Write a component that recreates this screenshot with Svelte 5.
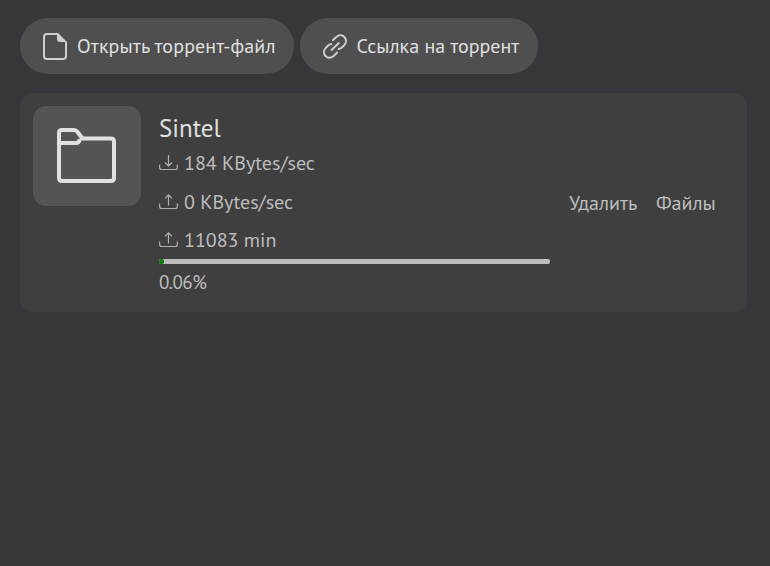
<script>
  const stats = [
    { kind: 'down', text: '184 KBytes/sec' },
    { kind: 'up', text: '0 KBytes/sec' },
    { kind: 'up', text: '11083 min' }
  ];
  const percent = 0.06;
</script>

<main>
  <nav>
    <button class="pill file">
      <svg width="26" height="28" viewBox="0 0 26 28">
        <path d="M15 2H4Q1 2 1 5V24Q1 27 4 27H20Q23 27 23 24V10" fill="none" stroke="#cfcfcf" stroke-width="2" />
        <path d="M14 1H15L24 10H17Q14 10 14 7Z" fill="#cfcfcf" />
      </svg>
      <span>Открыть торрент-файл</span>
    </button>
    <button class="pill link">
      <svg width="26" height="28" viewBox="0 0 26 28" fill="none" stroke="#cfcfcf" stroke-width="2">
        <path d="M9.300 8.700L13.300 5C19-.2 26.500 7.500 21.200 13.200L18.500 15.800Q16.800 17.200 14.800 17" />
        <path d="M9.200 11.900Q7 11.700 5.400 13.200L2.800 15.900C-2.600 21.500 5 29.200 10.600 23.900L14.700 20.100" />
        <path d="M8 18.500L16.300 10.500" />
      </svg>
      <span>Ссылка на торрент</span>
    </button>
  </nav>

  <article>
    <div class="tile">
      <svg width="60" height="56" viewBox="0 0 60 56" fill="none" stroke="#e0e0e0" stroke-width="4" stroke-linejoin="round">
        <path d="M2 5Q2 2 5 2H17Q19 2 20.500 4L25.500 10.500H54Q57 10.500 57 13.500V50Q57 53 54 53H5Q2 53 2 50Z" />
        <path d="M2 15H19Q22 15 23 11" />
      </svg>
    </div>
    <div class="info">
      <h1>Sintel</h1>
      {#each stats as s}
        <div class="stat">
          <svg width="19" height="16" viewBox="0 0 19 16" fill="none" stroke="#b0b0b0" stroke-width="1.200">
            <path d="M.650 9.500V12.500Q.650 14.500 2.650 14.500H16.350Q18.350 14.500 18.350 12.500V9.500" />
            {#if s.kind === 'down'}
              <path d="M9.500 0V11M6 7.500L9.500 11L13 7.500" />
            {:else}
              <path d="M9.500 11.500V.800M6 4.300L9.500 .800L13 4.300" />
            {/if}
          </svg>
          <span>{s.text}</span>
        </div>
      {/each}
      <div class="bar"><div class="done" style="width: {percent}%"></div></div>
      <div class="percent">{percent}%</div>
    </div>
    <div class="actions">
      <button class="remove">Удалить</button>
      <button class="files">Файлы</button>
    </div>
  </article>
</main>

<style>
  :global(body) { margin: 0; background: #36373b; }
  main {
    box-sizing: border-box;
    height: 566px;
    padding: 18px 23px 0 20px;
    font-family: 'PT Sans', 'Noto Sans', sans-serif;
    font-size: 20px;
    color: #bdbdbd;
    white-space: nowrap;
  }
  button {
    border: 0;
    padding: 0;
    background: none;
    font: inherit;
    color: inherit;
    text-align: left;
  }
  nav { display: flex; gap: 6px; }
  .pill {
    box-sizing: border-box;
    display: flex;
    align-items: center;
    height: 56px;
    padding-left: 23px;
    gap: 8px;
    border-radius: 28px;
    background: #4f4f4f;
    color: #e0e0e0;
  }
  .file { width: 274px; letter-spacing: 0.12px; }
  .link { width: 238px; padding-left: 22.5px; letter-spacing: 0.03px; }
  article {
    box-sizing: border-box;
    display: flex;
    height: 219px;
    margin-top: 19px;
    padding: 13px;
    border-radius: 13px;
    background: #3f3f3f;
  }
  .tile {
    display: flex;
    align-items: center;
    justify-content: center;
    width: 108px;
    height: 100px;
    border-radius: 13px;
    background: #545454;
  }
  .info { width: 391px; margin-left: 18px; }
  h1 {
    margin: 6px 0 0;
    font-size: 25px;
    font-weight: 400;
    line-height: 32px;
    color: #e0e0e0;
  }
  .stat {
    display: flex;
    align-items: center;
    gap: 6px;
    height: 38.5px;
    line-height: 38px;
  }
  .bar { height: 5px; margin-top: -1px; border-radius: 2px; background: #bdbdbd; overflow: hidden; }
  .done { min-width: 5px; height: 5px; border-radius: 2px; background: #008000; }
  .percent { margin-top: 6px; font-size: 19px; line-height: 25px; letter-spacing: -0.5px; }
  .actions {
    display: flex;
    align-items: center;
    gap: 19px;
    margin-left: 19px;
  }
  .remove { width: 68px; }
</style>
